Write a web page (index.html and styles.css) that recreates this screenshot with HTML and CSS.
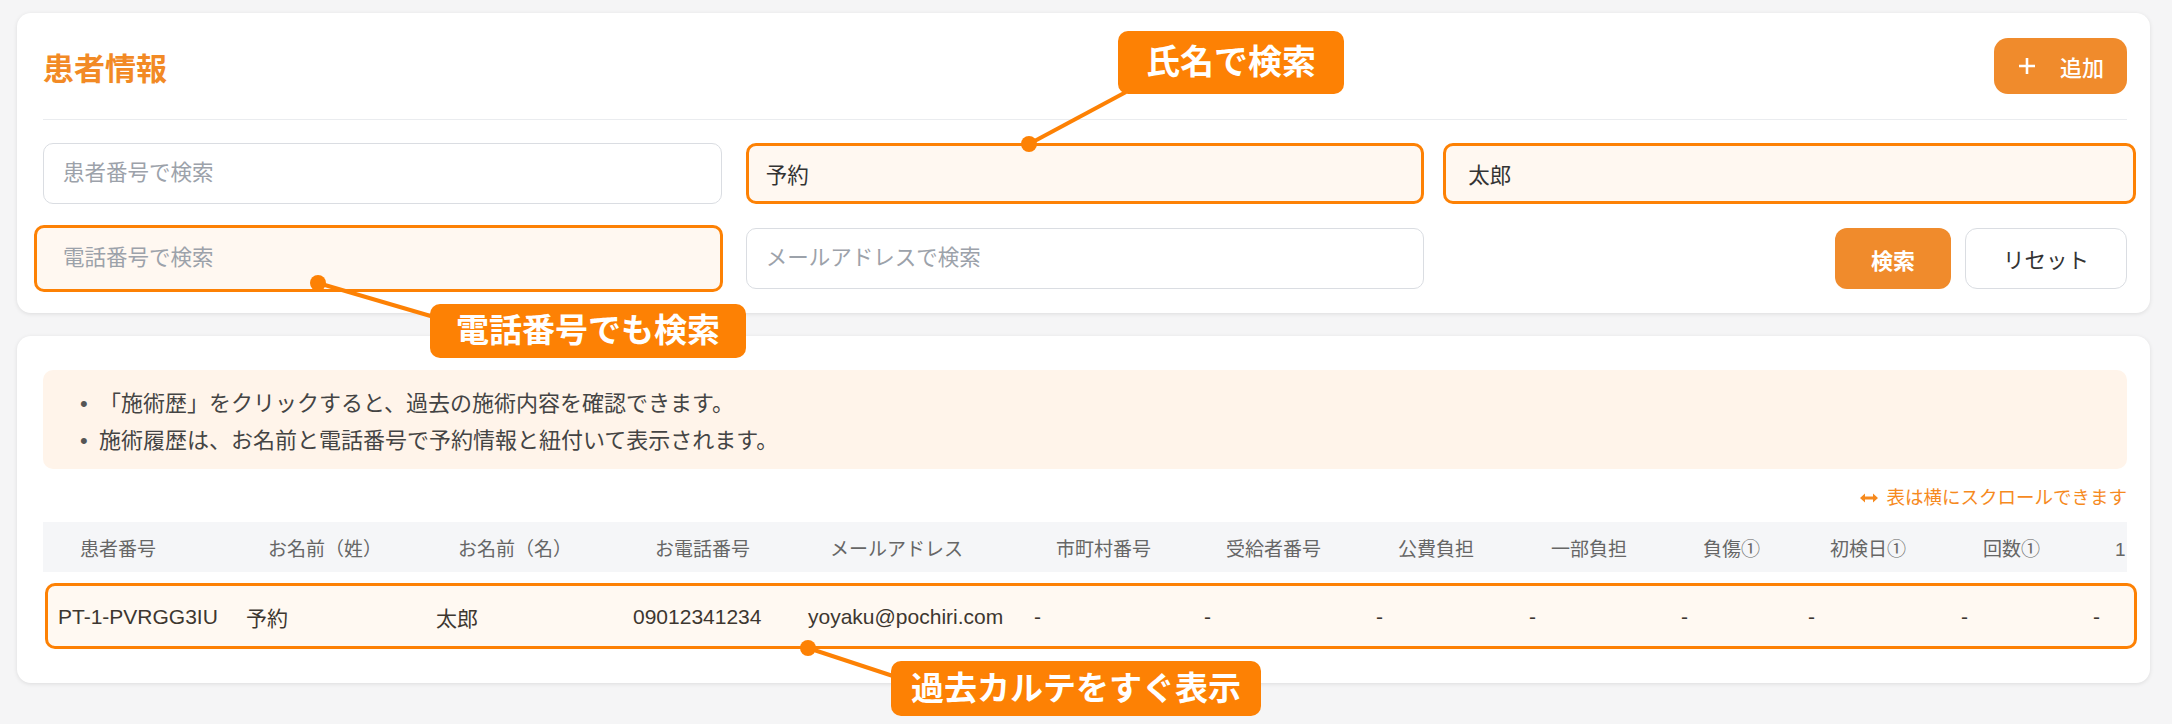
FILE: index.html
```html
<!DOCTYPE html>
<html lang="ja">
<head>
  <meta charset="UTF-8" />
  <title>患者情報</title>
  <meta name="viewport" content="width=device-width, initial-scale=1.0" />
  <link rel="stylesheet" href="styles.css">
</head>
<body>
  <div class="page">
    <section class="card search-card">
      <div class="card-head">
        <h1>患者情報</h1>
        <button class="btn btn-add">
          <svg class="plus" viewBox="0 0 18 18" width="18" height="18"><path d="M9 1v16M1 9h16" /></svg>
          追加
        </button>
      </div>
      <div class="search-grid">
        <input class="field" type="text" placeholder="患者番号で検索">
        <input class="field marked" type="text" value="予約">
        <input class="field marked grow-right" type="text" value="太郎">
        <input class="field marked grow-left" type="text" placeholder="電話番号で検索">
        <input class="field" type="text" placeholder="メールアドレスで検索">
        <div class="actions">
          <button class="btn btn-search">検索</button>
          <button class="btn btn-reset">リセット</button>
        </div>
      </div>
    </section>

    <section class="card list-card">
      <div class="notice">
        <ul>
          <li>「施術歴」をクリックすると、過去の施術内容を確認できます。</li>
          <li>施術履歴は、お名前と電話番号で予約情報と紐付いて表示されます。</li>
        </ul>
      </div>
      <div class="scroll-hint">
        <svg viewBox="0 0 18 10" width="18" height="10"><path d="M0 5l5-4.5v9zM18 5l-5-4.5v9z" /><path class="bar" d="M4 5h10" /></svg>
        表は横にスクロールできます
      </div>
      <div class="table-area">
        <div class="table-scroll">
          <table class="patients">
            <thead>
              <tr>
                <th>患者番号</th>
                <th>お名前（姓）</th>
                <th>お名前（名）</th>
                <th>お電話番号</th>
                <th>メールアドレス</th>
                <th>市町村番号</th>
                <th>受給者番号</th>
                <th>公費負担</th>
                <th>一部負担</th>
                <th>負傷①</th>
                <th>初検日①</th>
                <th>回数①</th>
                <th>1日目</th>
              </tr>
            </thead>
            <tbody>
              <tr>
                <td>PT-1-PVRGG3IU</td>
                <td>予約</td>
                <td>太郎</td>
                <td>09012341234</td>
                <td>yoyaku@pochiri.com</td>
                <td>-</td>
                <td>-</td>
                <td>-</td>
                <td>-</td>
                <td>-</td>
                <td>-</td>
                <td>-</td>
                <td>-</td>
              </tr>
            </tbody>
          </table>
        </div>
        <div class="row-mark"></div>
      </div>
    </section>

    <svg class="leaders" viewBox="0 0 2172 724" width="2172" height="724">
      <line x1="1029" y1="144" x2="1126" y2="92" />
      <circle cx="1029" cy="144" r="8" />
      <line x1="318" y1="283" x2="434" y2="317" />
      <circle cx="318" cy="283" r="8" />
      <line x1="808" y1="648" x2="896" y2="677" />
      <circle cx="808" cy="648" r="8" />
    </svg>

    <div class="callout callout-name">氏名で検索</div>
    <div class="callout callout-tel">電話番号でも検索</div>
    <div class="callout callout-chart">過去カルテをすぐ表示</div>
  </div>
</body>
</html>
```

FILE: styles.css
```css
body {
  margin: 0;
  background: #f5f5f6;
  font-family: "Liberation Sans", "Noto Sans CJK JP", sans-serif;
  color: #333;
}
.page {
  position: relative;
  padding: 13px 22px 40px 17px;
}
.card {
  background: #fff;
  border-radius: 14px;
  box-shadow: 0 1px 4px rgba(0, 0, 0, 0.1);
}
.search-card {
  padding: 25px 23px 24px 26px;
}
.card-head {
  display: flex;
  justify-content: space-between;
  align-items: center;
  padding-bottom: 25px;
  border-bottom: 1px solid #eaecef;
  margin-bottom: 23px;
}
h1 {
  margin: 0;
  font-size: 31px;
  font-weight: 700;
  color: #f28a25;
}
.btn {
  font-family: inherit;
  border: none;
  cursor: pointer;
}
.btn-add {
  display: flex;
  align-items: center;
  gap: 24px;
  height: 56px;
  padding: 0 23px 0 24px;
  border-radius: 14px;
  background: #f08b2c;
  color: #fff;
  font-size: 22px;
  font-weight: 500;
}
.plus {
  stroke: #fff;
  stroke-width: 2.6;
  fill: none;
}
.search-grid {
  display: grid;
  grid-template-columns: repeat(3, 1fr);
  gap: 24px;
}
.field {
  box-sizing: border-box;
  height: 61px;
  width: 100%;
  padding: 0 19px;
  border: 1px solid #dadde2;
  border-radius: 10px;
  background: #fff;
  font-family: inherit;
  font-size: 21.5px;
  color: #333;
}
.field::placeholder {
  color: #9ca2aa;
}
.field.marked {
  border: 3px solid #fd8104;
  background: #fff8f1;
  padding-left: 17px;
}
.field.grow-left {
  margin: -3px 0 -3px -9px;
  width: calc(100% + 10px);
  height: 67px;
  padding-left: 26px;
}
.field.grow-right {
  margin-left: -5px;
  width: calc(100% + 14px);
  padding-left: 22px;
}
.actions {
  display: flex;
  justify-content: flex-end;
  gap: 14px;
}
.btn-search {
  height: 61px;
  width: 116px;
  border-radius: 12px;
  background: #f08b2c;
  color: #fff;
  font-size: 22px;
  font-weight: 700;
}
.btn-reset {
  height: 61px;
  width: 162px;
  border-radius: 12px;
  border: 1px solid #dadde2;
  background: #fff;
  color: #333;
  font-size: 21.5px;
}
.list-card {
  margin-top: 23px;
  padding: 34px 23px 21px 26px;
}
.notice {
  background: #fff4ea;
  border-radius: 10px;
  padding: 15px 20px 10px 37px;
}
.notice ul {
  margin: 0;
  padding: 0;
  list-style: none;
}
.notice li {
  display: flex;
  font-size: 22px;
  line-height: 37px;
  color: #444;
}
.notice li::before {
  content: "•";
  width: 19px;
  flex: none;
  color: #555;
}
.scroll-hint {
  display: flex;
  justify-content: flex-end;
  align-items: center;
  gap: 8px;
  margin: 17px 0 12px;
  font-size: 18.5px;
  line-height: 24px;
  color: #f68a1e;
}
.scroll-hint svg {
  fill: #f68a1e;
}
.scroll-hint .bar {
  stroke: #f68a1e;
  stroke-width: 3;
}
.table-area {
  position: relative;
}
.table-scroll {
  overflow: hidden;
}
.patients {
  border-collapse: collapse;
  table-layout: fixed;
  width: 2185px;
}
.patients th {
  box-sizing: border-box;
  height: 50px;
  padding: 0 0 0 37px;
  background: #f5f6f8;
  text-align: left;
  font-size: 19px;
  font-weight: 400;
  color: #666;
  white-space: nowrap;
}
.patients td {
  height: 90px;
  padding: 0 0 0 15px;
  font-size: 21px;
  color: #333;
  white-space: nowrap;
}
.patients th:nth-child(1) { width: 188px; }
.patients th:nth-child(2) { width: 190px; }
.patients th:nth-child(3) { width: 197px; }
.patients th:nth-child(4) { width: 175px; }
.patients th:nth-child(5) { width: 226px; }
.patients th:nth-child(6) { width: 170px; }
.patients th:nth-child(7) { width: 172px; }
.patients th:nth-child(8) { width: 153px; }
.patients th:nth-child(9) { width: 152px; }
.patients th:nth-child(10) { width: 127px; }
.patients th:nth-child(11) { width: 153px; }
.patients th:nth-child(12) { width: 132px; }
.patients th:nth-child(13) { width: 150px; }
.row-mark {
  position: absolute;
  left: 2px;
  right: -10px;
  top: 61px;
  height: 66px;
  box-sizing: border-box;
  border: 3px solid #fd8104;
  border-radius: 10px;
  background: rgba(253, 129, 4, 0.05);
}
.leaders {
  position: absolute;
  top: 0;
  left: 0;
  pointer-events: none;
}
.leaders line {
  stroke: #fd8104;
  stroke-width: 4;
}
.leaders circle {
  fill: #fd8104;
}
.callout {
  position: absolute;
  background: #fd8104;
  color: #fff;
  font-weight: 700;
  font-size: 33px;
  border-radius: 10px;
  white-space: nowrap;
}
.callout-name {
  left: 1118px;
  top: 31px;
  height: 63px;
  line-height: 63px;
  padding: 0 28px;
  font-size: 34px;
}
.callout-tel {
  left: 430px;
  top: 304px;
  height: 54px;
  line-height: 54px;
  padding: 0 26px;
}
.callout-chart {
  left: 891px;
  top: 661px;
  height: 55px;
  line-height: 55px;
  padding: 0 20px;
}
```
